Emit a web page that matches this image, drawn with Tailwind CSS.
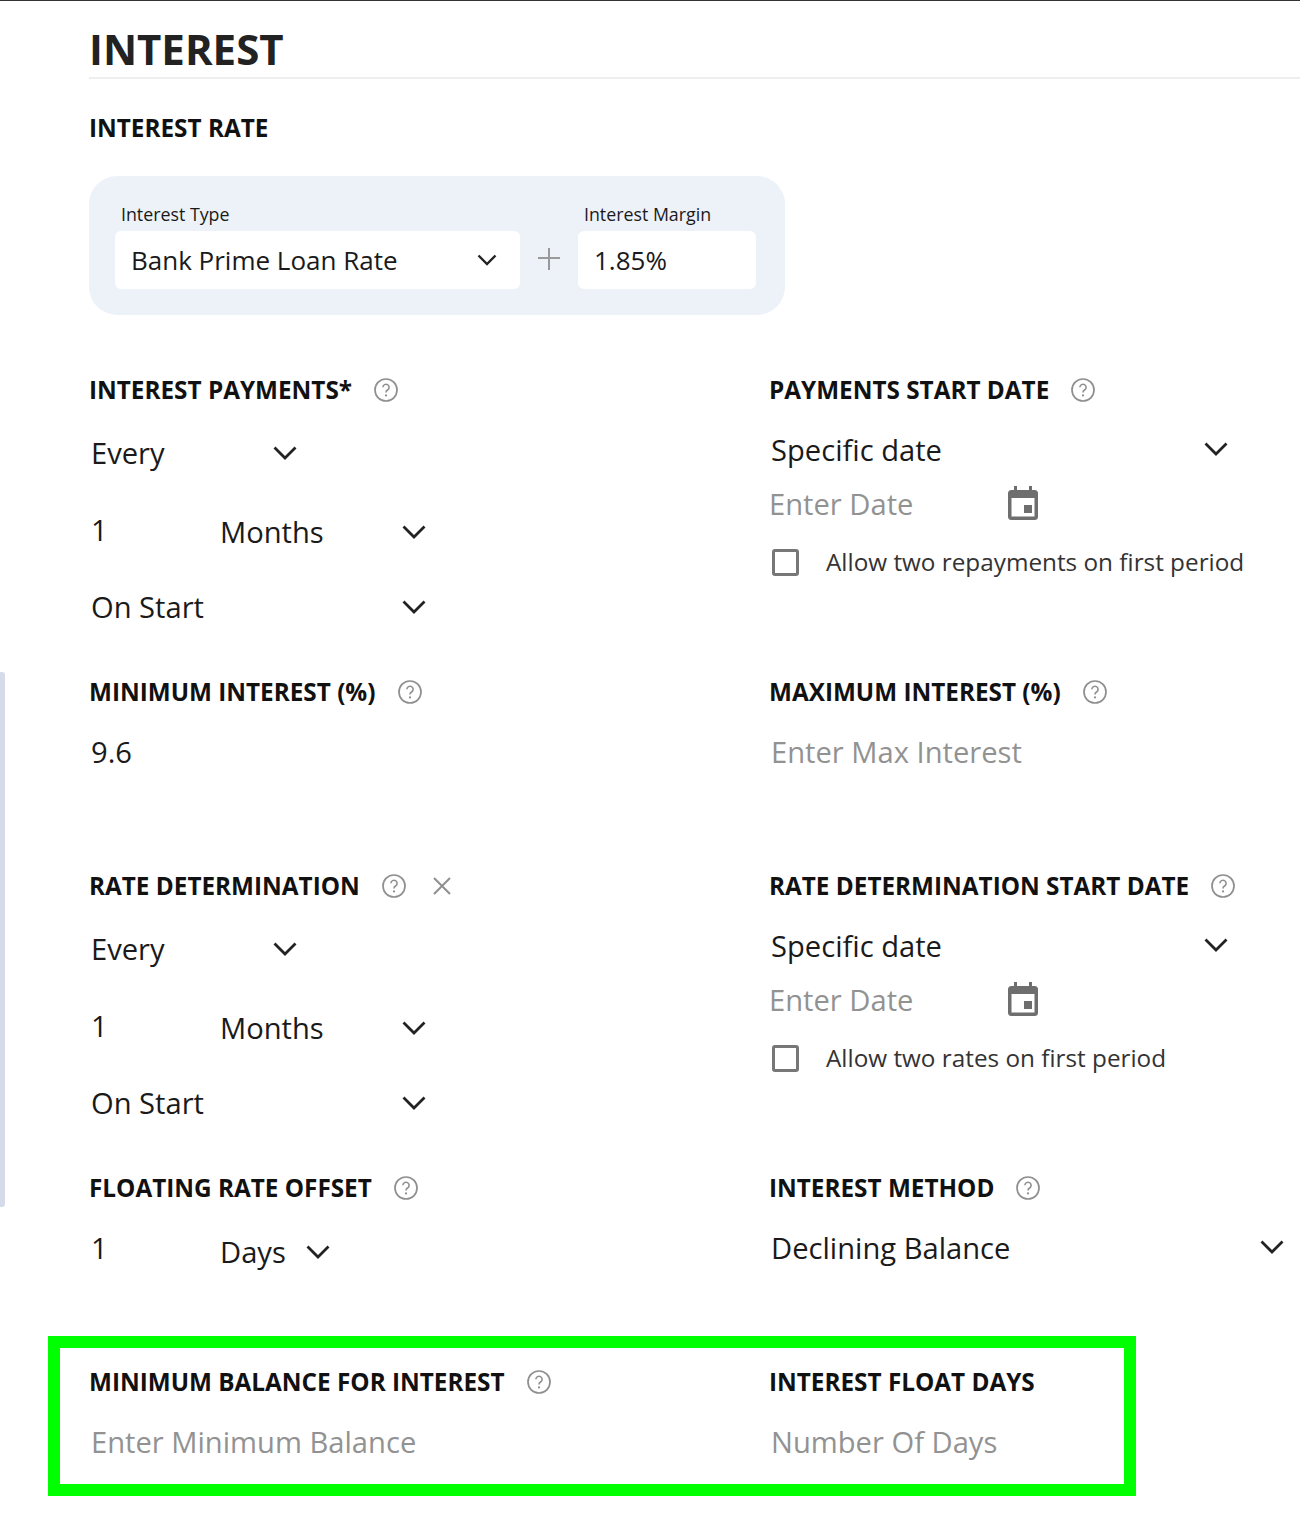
<!DOCTYPE html>
<html><head><meta charset="utf-8"><script src="https://cdn.jsdelivr.net/npm/@tailwindcss/browser@4"></script></head>
<body class="bg-white">
<div class="relative w-[1300px] h-[1535px] overflow-hidden bg-white font-['Open_Sans',sans-serif] text-[#1a1a1a]">
<div class="h-px bg-[#333]"></div>
<div class="absolute left-0 top-[672px] w-[5px] h-[535px] bg-[#d5dbe8] rounded-r-[3px]"></div>
<div class="pl-[89px]">
  <h1 class="h-[78px] pt-[19px] text-[42px] leading-[57px] font-bold text-[#222] border-b-2 border-[#eeeeee]">INTEREST</h1>
  <h2 class="mt-[37px] h-6 text-[24.3px] leading-6 font-bold text-[#111]">INTEREST RATE</h2>
  <div class="mt-[36px] w-[696px] h-[139px] bg-[#edf2f9] rounded-[28px] pl-[26px] pt-[27px] flex">
    <div class="w-[405px]">
      <div class="h-7 pl-[6px] text-[17.8px] leading-[23px]">Interest Type</div>
      <div class="h-[58px] bg-white rounded-md pl-[16px] pr-[21px] flex items-center justify-between text-[26px]"><span>Bank Prime Loan Rate</span>
        <svg class="w-6 h-6" viewBox="0 0 24 24" fill="none" stroke="#222" stroke-width="2.4"><path d="M3.500 7.500 12 16l8.500-8.500"/></svg></div>
    </div>
    <div class="w-[58px] pt-[27px] flex justify-center"><svg class="w-[58px] h-[58px]" viewBox="0 0 58 58" fill="none" stroke="#999" stroke-width="2"><path d="M29 18v22M18 28h22"/></svg></div>
    <div class="w-[178px]">
      <div class="h-7 pl-[6px] text-[17.8px] leading-[23px]">Interest Margin</div>
      <div class="h-[58px] bg-white rounded-md pl-[16px] flex items-center text-[26px]">1.85%</div>
    </div>
  </div>
  <div class="mt-[63px] grid grid-cols-[680px_1fr] text-[29.15px]">
    <!-- row 1 -->
    <div class="h-[302px]">
      <div class="h-6 flex items-center gap-[22px] text-[24.3px] font-bold text-[#111]"><span>INTEREST PAYMENTS*</span>
        <svg class="w-6 h-6" viewBox="0 0 24 24" fill="none"><circle cx="12" cy="12" r="11" stroke="#8f8f8f" stroke-width="1.7"/><path d="M8.900 9.300a3.100 3.100 0 1 1 4.700 2.700c-1 .6-1.600 1.100-1.600 2.400" stroke="#8f8f8f" stroke-width="1.6"/><circle cx="12" cy="17.400" r="1.100" fill="#8f8f8f"/></svg></div>
      <div class="mt-[31px] flex items-center h-10 pl-[2px] w-[210px] justify-between"><span class="mt-[2px]">Every</span><svg class="w-7 h-7" viewBox="0 0 28 28" fill="none" stroke="#222" stroke-width="2.8"><path d="M3.500 8.500 14 19 24.500 8.500"/></svg></div>
      <div class="mt-[39px] flex items-center h-10 pl-[2px] w-[339px] justify-between"><span class="-mt-[2px] w-[129px]">1</span><span class="flex-1 mt-[2px]">Months</span><svg class="w-7 h-7" viewBox="0 0 28 28" fill="none" stroke="#222" stroke-width="2.8"><path d="M3.500 8.500 14 19 24.500 8.500"/></svg></div>
      <div class="mt-[35px] flex items-center h-10 pl-[2px] w-[339px] justify-between"><span class="mt-[2px]">On Start</span><svg class="w-7 h-7" viewBox="0 0 28 28" fill="none" stroke="#222" stroke-width="2.8"><path d="M3.500 8.500 14 19 24.500 8.500"/></svg></div>
    </div>
    <div class="h-[302px]">
      <div class="h-6 flex items-center gap-[22px] text-[24.3px] font-bold text-[#111]"><span>PAYMENTS START DATE</span>
        <svg class="w-6 h-6" viewBox="0 0 24 24" fill="none"><circle cx="12" cy="12" r="11" stroke="#8f8f8f" stroke-width="1.7"/><path d="M8.900 9.300a3.100 3.100 0 1 1 4.700 2.700c-1 .6-1.600 1.100-1.600 2.400" stroke="#8f8f8f" stroke-width="1.6"/><circle cx="12" cy="17.400" r="1.100" fill="#8f8f8f"/></svg></div>
      <div class="mt-[28px] flex items-center h-10 pl-[2px] w-[461px] justify-between"><span class="mt-[2px]">Specific date</span><svg class="w-7 h-7 -mt-[2px]" viewBox="0 0 28 28" fill="none" stroke="#222" stroke-width="2.8"><path d="M3.500 8.500 14 19 24.500 8.500"/></svg></div>
      <div class="mt-[14px] flex items-center h-10"><span class="mt-[2px] w-[238px] text-[#929292]">Enter Date</span><svg class="w-[32px] h-[36px] -mt-[2px]" viewBox="0 0 32 36" fill="#6e6e6e"><path d="M7 1h3v4h12V1h3v4h2.500A3.500 3.500 0 0 1 31 8.500v23a3.500 3.500 0 0 1-3.500 3.500h-23A3.500 3.500 0 0 1 1 31.500v-23A3.500 3.500 0 0 1 4.500 5H7zM4.500 13v18.500h23V13z"/><rect x="17" y="20" width="8" height="8"/></svg></div>
      <div class="mt-[18px] flex items-center h-10 text-[24.3px] text-[#333]"><span class="ml-[3px] w-[27px] h-[27px] rounded-[3px] border-[3px] border-[#777] mr-[27px]"></span><span>Allow two repayments on first period</span></div>
    </div>
    <!-- row 2 -->
    <div class="h-[194px]">
      <div class="h-6 flex items-center gap-[22px] text-[24.3px] font-bold text-[#111]"><span>MINIMUM INTEREST (%)</span>
        <svg class="w-6 h-6" viewBox="0 0 24 24" fill="none"><circle cx="12" cy="12" r="11" stroke="#8f8f8f" stroke-width="1.7"/><path d="M8.900 9.300a3.100 3.100 0 1 1 4.700 2.700c-1 .6-1.600 1.100-1.600 2.400" stroke="#8f8f8f" stroke-width="1.6"/><circle cx="12" cy="17.400" r="1.100" fill="#8f8f8f"/></svg></div>
      <div class="mt-[29px] flex items-center h-10 pl-[2px]">9.6</div>
    </div>
    <div class="h-[194px]">
      <div class="h-6 flex items-center gap-[22px] text-[24.3px] font-bold text-[#111]"><span>MAXIMUM INTEREST (%)</span>
        <svg class="w-6 h-6" viewBox="0 0 24 24" fill="none"><circle cx="12" cy="12" r="11" stroke="#8f8f8f" stroke-width="1.7"/><path d="M8.900 9.300a3.100 3.100 0 1 1 4.700 2.700c-1 .6-1.600 1.100-1.600 2.400" stroke="#8f8f8f" stroke-width="1.6"/><circle cx="12" cy="17.400" r="1.100" fill="#8f8f8f"/></svg></div>
      <div class="mt-[29px] flex items-center h-10 pl-[2px] text-[#929292]">Enter Max Interest</div>
    </div>
    <!-- row 3 -->
    <div class="h-[302px]">
      <div class="h-6 flex items-center text-[24.3px] font-bold text-[#111]"><span>RATE DETERMINATION</span>
        <svg class="ml-[22px] w-6 h-6" viewBox="0 0 24 24" fill="none"><circle cx="12" cy="12" r="11" stroke="#8f8f8f" stroke-width="1.7"/><path d="M8.900 9.300a3.100 3.100 0 1 1 4.700 2.700c-1 .6-1.600 1.100-1.600 2.400" stroke="#8f8f8f" stroke-width="1.6"/><circle cx="12" cy="17.400" r="1.100" fill="#8f8f8f"/></svg>
        <svg class="ml-[26px] w-[20px] h-[20px]" viewBox="0 0 20 20" fill="none" stroke="#8f8f8f" stroke-width="2"><path d="m2 2 16 16M18 2 2 18"/></svg></div>
      <div class="mt-[31px] flex items-center h-10 pl-[2px] w-[210px] justify-between"><span class="mt-[2px]">Every</span><svg class="w-7 h-7" viewBox="0 0 28 28" fill="none" stroke="#222" stroke-width="2.8"><path d="M3.500 8.500 14 19 24.500 8.500"/></svg></div>
      <div class="mt-[39px] flex items-center h-10 pl-[2px] w-[339px] justify-between"><span class="-mt-[2px] w-[129px]">1</span><span class="flex-1 mt-[2px]">Months</span><svg class="w-7 h-7" viewBox="0 0 28 28" fill="none" stroke="#222" stroke-width="2.8"><path d="M3.500 8.500 14 19 24.500 8.500"/></svg></div>
      <div class="mt-[35px] flex items-center h-10 pl-[2px] w-[339px] justify-between"><span class="mt-[2px]">On Start</span><svg class="w-7 h-7" viewBox="0 0 28 28" fill="none" stroke="#222" stroke-width="2.8"><path d="M3.500 8.500 14 19 24.500 8.500"/></svg></div>
    </div>
    <div class="h-[302px]">
      <div class="h-6 flex items-center gap-[22px] text-[24.3px] font-bold text-[#111]"><span>RATE DETERMINATION START DATE</span>
        <svg class="w-6 h-6" viewBox="0 0 24 24" fill="none"><circle cx="12" cy="12" r="11" stroke="#8f8f8f" stroke-width="1.7"/><path d="M8.900 9.300a3.100 3.100 0 1 1 4.700 2.700c-1 .6-1.600 1.100-1.600 2.400" stroke="#8f8f8f" stroke-width="1.6"/><circle cx="12" cy="17.400" r="1.100" fill="#8f8f8f"/></svg></div>
      <div class="mt-[28px] flex items-center h-10 pl-[2px] w-[461px] justify-between"><span class="mt-[2px]">Specific date</span><svg class="w-7 h-7 -mt-[2px]" viewBox="0 0 28 28" fill="none" stroke="#222" stroke-width="2.8"><path d="M3.500 8.500 14 19 24.500 8.500"/></svg></div>
      <div class="mt-[14px] flex items-center h-10"><span class="mt-[2px] w-[238px] text-[#929292]">Enter Date</span><svg class="w-[32px] h-[36px] -mt-[2px]" viewBox="0 0 32 36" fill="#6e6e6e"><path d="M7 1h3v4h12V1h3v4h2.500A3.500 3.500 0 0 1 31 8.500v23a3.500 3.500 0 0 1-3.500 3.500h-23A3.500 3.500 0 0 1 1 31.500v-23A3.500 3.500 0 0 1 4.500 5H7zM4.500 13v18.500h23V13z"/><rect x="17" y="20" width="8" height="8"/></svg></div>
      <div class="mt-[18px] flex items-center h-10 text-[24.3px] text-[#333]"><span class="ml-[3px] w-[27px] h-[27px] rounded-[3px] border-[3px] border-[#777] mr-[27px]"></span><span>Allow two rates on first period</span></div>
    </div>
    <!-- row 4 -->
    <div class="h-[194px]">
      <div class="h-6 flex items-center gap-[22px] text-[24.3px] font-bold text-[#111]"><span>FLOATING RATE OFFSET</span>
        <svg class="w-6 h-6" viewBox="0 0 24 24" fill="none"><circle cx="12" cy="12" r="11" stroke="#8f8f8f" stroke-width="1.7"/><path d="M8.900 9.300a3.100 3.100 0 1 1 4.700 2.700c-1 .6-1.600 1.100-1.600 2.400" stroke="#8f8f8f" stroke-width="1.6"/><circle cx="12" cy="17.400" r="1.100" fill="#8f8f8f"/></svg></div>
      <div class="mt-[32px] flex items-center h-10 pl-[2px] w-[243px] justify-between"><span class="-mt-[6px] w-[129px]">1</span><span class="flex-1 mt-[2px]">Days</span><svg class="w-7 h-7" viewBox="0 0 28 28" fill="none" stroke="#222" stroke-width="2.8"><path d="M3.500 8.500 14 19 24.500 8.500"/></svg></div>
    </div>
    <div class="h-[194px]">
      <div class="h-6 flex items-center gap-[22px] text-[24.3px] font-bold text-[#111]"><span>INTEREST METHOD</span>
        <svg class="w-6 h-6" viewBox="0 0 24 24" fill="none"><circle cx="12" cy="12" r="11" stroke="#8f8f8f" stroke-width="1.7"/><path d="M8.900 9.300a3.100 3.100 0 1 1 4.700 2.700c-1 .6-1.600 1.100-1.600 2.400" stroke="#8f8f8f" stroke-width="1.6"/><circle cx="12" cy="17.400" r="1.100" fill="#8f8f8f"/></svg></div>
      <div class="mt-[28px] flex items-center h-10 pl-[2px] w-[517px] justify-between"><span class="mt-[2px]">Declining Balance</span><svg class="w-7 h-7 -mt-[2px]" viewBox="0 0 28 28" fill="none" stroke="#222" stroke-width="2.8"><path d="M3.500 8.500 14 19 24.500 8.500"/></svg></div>
    </div>
    <!-- row 5 -->
    <div>
      <div class="h-6 flex items-center gap-[22px] text-[24.3px] font-bold text-[#111]"><span>MINIMUM BALANCE FOR INTEREST</span>
        <svg class="w-6 h-6" viewBox="0 0 24 24" fill="none"><circle cx="12" cy="12" r="11" stroke="#8f8f8f" stroke-width="1.7"/><path d="M8.900 9.300a3.100 3.100 0 1 1 4.700 2.700c-1 .6-1.600 1.100-1.600 2.400" stroke="#8f8f8f" stroke-width="1.6"/><circle cx="12" cy="17.400" r="1.100" fill="#8f8f8f"/></svg></div>
      <div class="mt-[29px] flex items-center h-10 pl-[2px] text-[#929292]">Enter Minimum Balance</div>
    </div>
    <div>
      <div class="h-6 flex items-center text-[24.3px] font-bold text-[#111]"><span>INTEREST FLOAT DAYS</span></div>
      <div class="mt-[29px] flex items-center h-10 pl-[2px] text-[#929292]">Number Of Days</div>
    </div>
  </div>
</div>
<div class="absolute left-[48px] top-[1336px] w-[1088px] h-[160px] border-[12px] border-[#00ff00]"></div>
</div>
</body></html>
